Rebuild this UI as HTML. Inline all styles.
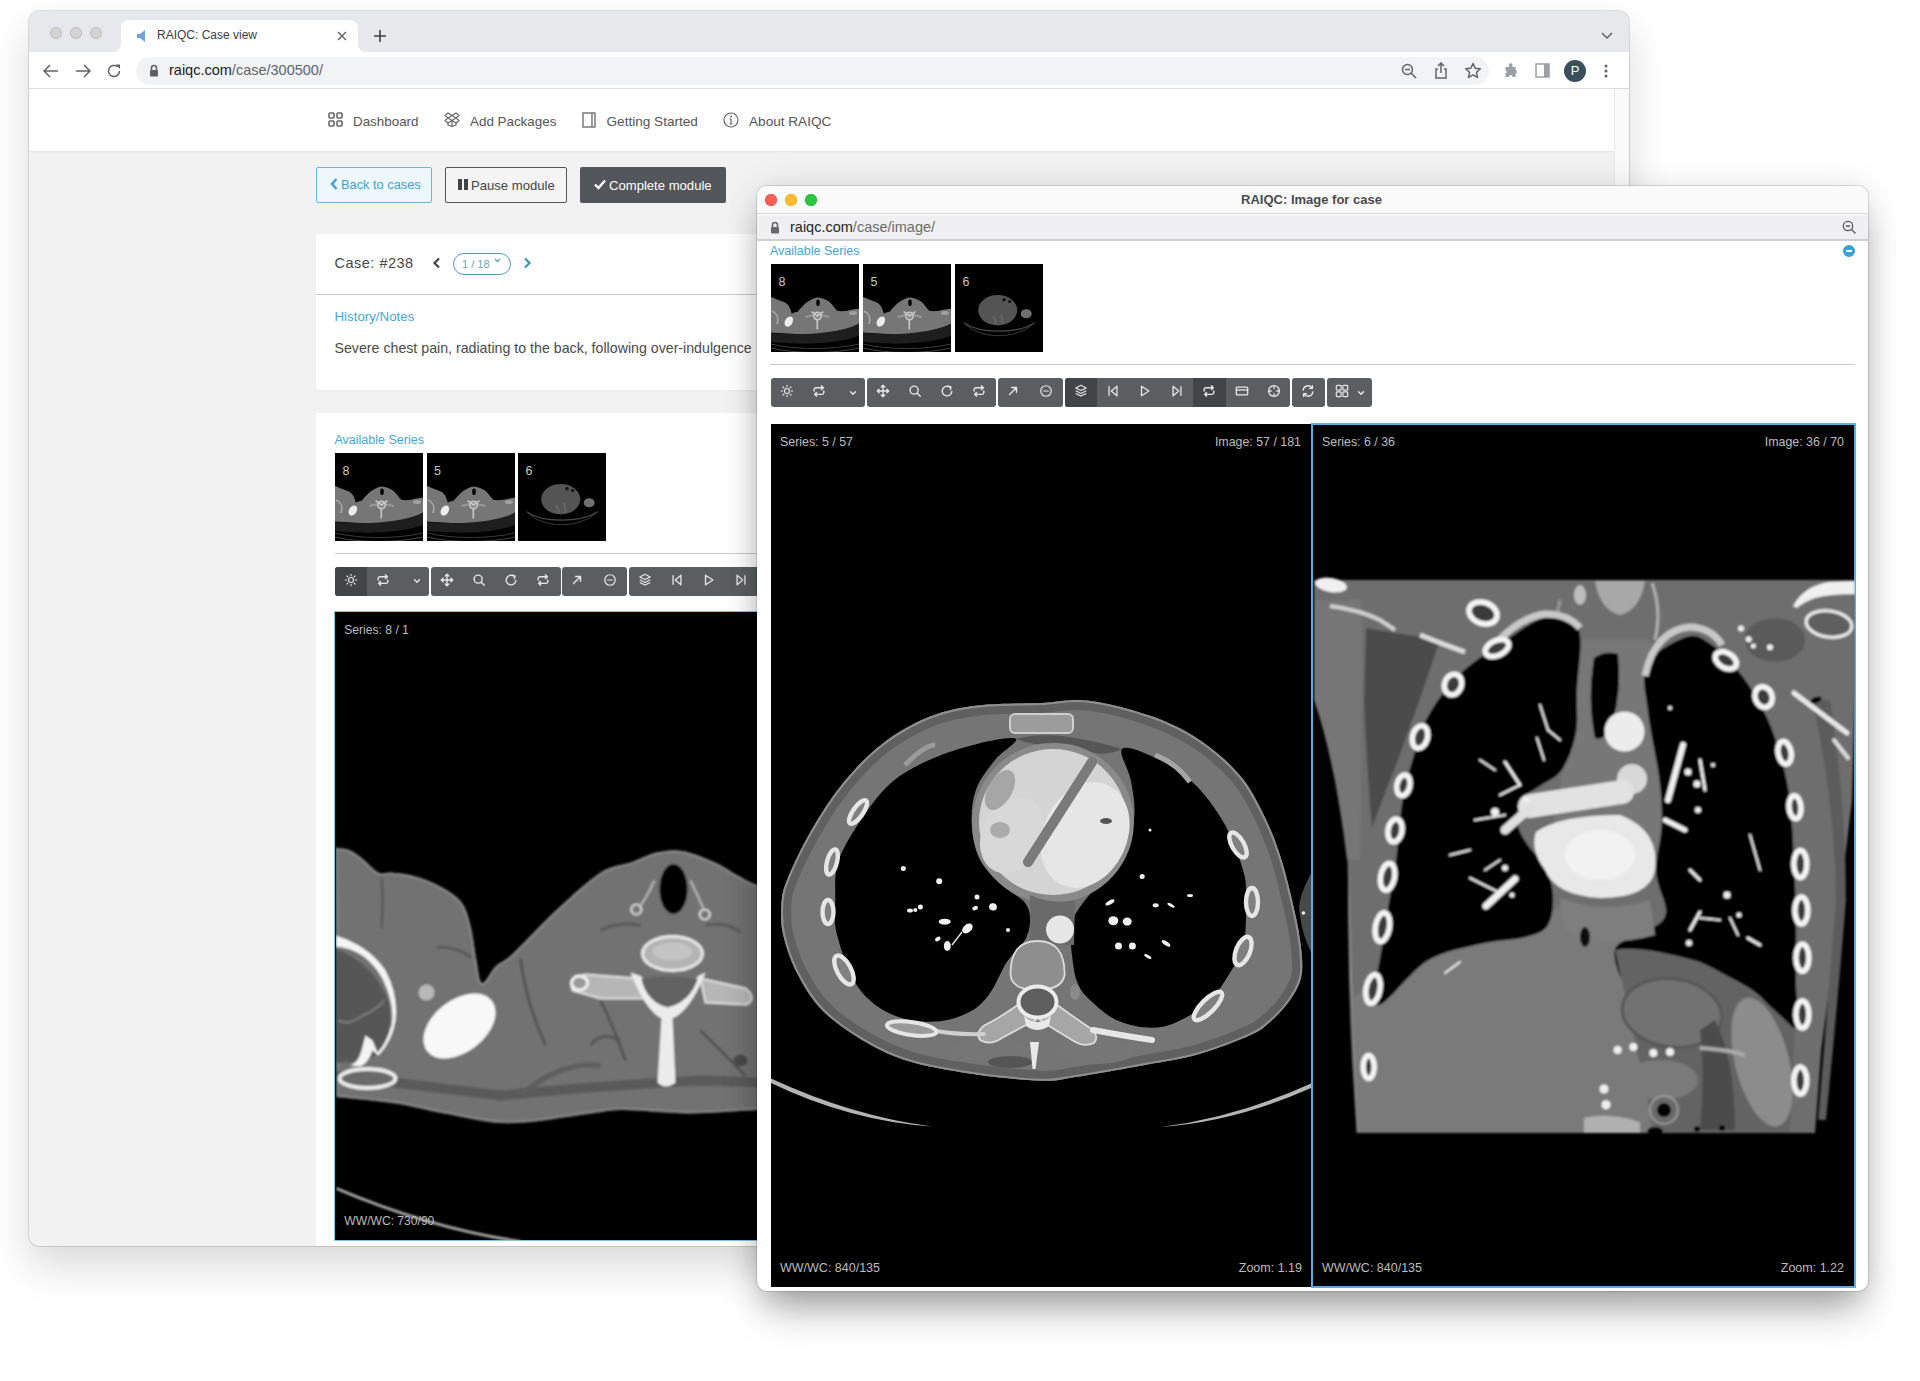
<!DOCTYPE html>
<html><head><meta charset="utf-8">
<style>
*{box-sizing:border-box;margin:0;padding:0}
html,body{width:1920px;height:1381px;overflow:hidden;background:#fff;font-family:"Liberation Sans",sans-serif}
.a{position:absolute}
#cw{left:29px;top:11px;width:1600px;height:1235px;border-radius:10px;background:#f2f2f2;overflow:hidden;box-shadow:0 20px 40px rgba(0,0,0,0.15),0 0 0 1px rgba(0,0,0,0.12)}
#fw{left:757px;top:186px;width:1111px;height:1105px;border-radius:10px;background:#fff;overflow:hidden;box-shadow:0 24px 38px -8px rgba(0,0,0,0.36),0 0 32px rgba(0,0,0,0.10),0 0 0 1px rgba(0,0,0,0.12)}
.tl{width:12px;height:12px;border-radius:50%}
.btn{height:36px;border-radius:2px;font-size:13px;line-height:34px;text-align:center}
.tb{height:29px;border-radius:3px;background:#5b5e61}
.bt{position:absolute;top:0;height:29px;width:32px}
.t{position:absolute;line-height:1;white-space:nowrap}
.ov{color:#c8c8c8;font-size:12px;position:absolute;white-space:nowrap}
</style></head><body>
<svg width="0" height="0" style="position:absolute"><defs>
<symbol id="th-neck" viewBox="0 0 88 88"><rect width="88" height="88" fill="#000"/>
<path d="M0 32.9 C3 34 9 36.5 12 37.8 C16 39 19 42 20.8 49.7 C22.5 48.5 24.5 48 26.7 47.7 C30 44 33 40 36.6 37.8 C40 35.5 44 33.4 47.5 33.4 C52 34 56 36 58.4 37.8 C62 41 64 45 66.3 46.7 C70 47.5 73 47 76 46.7 C80 46 84 45 88 44.8 V59.6 C84 62 80 64.5 76 65.5 C70 67.5 62 69 56.4 69.5 C50 70.2 43 70.5 36.6 70.5 C28 70.4 22 70 16.8 69.5 C10 69 4 68.8 0 68.5 Z" fill="#767676"/>
<path d="M0 69 C20 71 60 72 88 60 V72 C60 82 20 80 0 78Z" fill="#1e1e1e"/>
<path d="M0 80 C25 86 62 86 88 80" stroke="#3a3a3a" stroke-width="1" fill="none"/>
<path d="M0 84 C25 90 62 90 88 84" stroke="#555" stroke-width="0.8" fill="none"/>
<path d="M1 47 C6 49 8 54 6 60" stroke="#aaa" stroke-width="1.6" fill="none"/>
<ellipse cx="17.8" cy="57.6" rx="3.8" ry="5.5" transform="rotate(30 17.8 57.6)" fill="#ececec"/>
<ellipse cx="47" cy="38.8" rx="1.8" ry="3.2" fill="#000"/>
<path d="M34.6 53 Q46.5 49 58.4 53" stroke="#9a9a9a" stroke-width="2" fill="none"/>
<circle cx="46.5" cy="52" r="3.8" fill="#8a8a8a" stroke="#c8c8c8" stroke-width="1.5"/>
<path d="M40.6 47.7 L46.5 52 L52.5 47.7 M46.3 55.5 V65.5" stroke="#c8c8c8" stroke-width="1.6" fill="none"/>
<ellipse cx="82" cy="49" rx="4" ry="2" fill="#a0a0a0"/></symbol>
<symbol id="th-neck2" viewBox="0 0 88 88"><rect width="88" height="88" fill="#000"/>
<path d="M0 32.9 C3 34 9 36.5 12 37.8 C16 39 19 42 20.8 49.7 C22.5 48.5 24.5 48 26.7 47.7 C30 44 33 40 36.6 37.8 C40 35.5 44 33.4 47.5 33.4 C52 34 56 36 58.4 37.8 C62 41 64 45 66.3 46.7 C70 47.5 73 47 76 46.7 C80 46 84 45 88 44.8 V59.6 C84 62 80 64.5 76 65.5 C70 67.5 62 69 56.4 69.5 C50 70.2 43 70.5 36.6 70.5 C28 70.4 22 70 16.8 69.5 C10 69 4 68.8 0 68.5 Z" fill="#767676"/>
<path d="M0 69 C20 71 60 72 88 60 V72 C60 82 20 80 0 78Z" fill="#1e1e1e"/>
<path d="M0 80 C25 86 62 86 88 80" stroke="#3a3a3a" stroke-width="1" fill="none"/>
<path d="M0 84 C25 90 62 90 88 84" stroke="#555" stroke-width="0.8" fill="none"/>
<path d="M1 47 C6 49 8 54 6 60" stroke="#aaa" stroke-width="1.6" fill="none"/>
<ellipse cx="17.8" cy="57.6" rx="3.8" ry="5.5" transform="rotate(30 17.8 57.6)" fill="#ececec"/>
<ellipse cx="47" cy="38.8" rx="1.8" ry="3.2" fill="#000"/>
<path d="M34.6 53 Q46.5 49 58.4 53" stroke="#9a9a9a" stroke-width="2" fill="none"/>
<circle cx="46.5" cy="52" r="3.8" fill="#8a8a8a" stroke="#c8c8c8" stroke-width="1.5"/>
<path d="M40.6 47.7 L46.5 52 L52.5 47.7 M46.3 55.5 V65.5" stroke="#c8c8c8" stroke-width="1.6" fill="none"/>
<ellipse cx="82" cy="49" rx="4" ry="2" fill="#a0a0a0"/></symbol>
<symbol id="th-abd" viewBox="0 0 88 88"><rect width="88" height="88" fill="#000"/>
<ellipse cx="42.7" cy="46.2" rx="19.5" ry="15.3" fill="#545454"/>
<path d="M38 52 Q42 58 40 60 M46 50 Q48 56 47 60" stroke="#6a6a6a" stroke-width="1.5" fill="none"/>
<circle cx="49" cy="35.8" r="1.8" fill="#111"/><circle cx="54.6" cy="37.5" r="1.6" fill="#111"/>
<ellipse cx="71.2" cy="49.7" rx="5.5" ry="4.5" fill="#707070"/>
<path d="M8.7 58.7 C25 70 62 70 79.6 58.7" stroke="#4a4a4a" stroke-width="1.2" fill="none"/>
<path d="M8.7 58.7 C25 76 62 76 79.6 58.7" stroke="#3a3a3a" stroke-width="1" fill="none"/></symbol>
</defs></svg>
<svg width="0" height="0" style="position:absolute">
<defs>
<symbol id="i-sun" viewBox="0 0 16 16"><g fill="none" stroke="#e6e6e6" stroke-width="1.3" stroke-linecap="round"><circle cx="8" cy="8" r="2.8"/><path d="M8 1.5v1.6M8 12.9v1.6M1.5 8h1.6M12.9 8h1.6M3.4 3.4l1.1 1.1M11.5 11.5l1.1 1.1M3.4 12.6l1.1-1.1M11.5 4.5l1.1-1.1"/></g></symbol>
<symbol id="i-rep" viewBox="0 0 16 16"><g fill="none" stroke="#e6e6e6" stroke-width="1.6" stroke-linecap="round" stroke-linejoin="round"><path d="M2.5 8V6.2A2 2 0 0 1 4.5 4.2H13M10.8 2l2.2 2.2-2.2 2.2M13.5 8v1.8a2 2 0 0 1-2 2H3M5.2 14L3 11.8l2.2-2.2"/></g></symbol>
<symbol id="i-chev" viewBox="0 0 16 16"><path d="M4 6l4 4 4-4" fill="none" stroke="#e6e6e6" stroke-width="2.2" stroke-linecap="round" stroke-linejoin="round"/></symbol>
<symbol id="i-move" viewBox="0 0 16 16"><g fill="none" stroke="#e6e6e6" stroke-width="1.6" stroke-linecap="round" stroke-linejoin="round"><path d="M8 1.5v13M1.5 8h13M6 3.5l2-2 2 2M6 12.5l2 2 2-2M3.5 6l-2 2 2 2M12.5 6l2 2-2 2"/></g></symbol>
<symbol id="i-search" viewBox="0 0 16 16"><g fill="none" stroke="#e6e6e6" stroke-width="1.6" stroke-linecap="round"><circle cx="7" cy="7" r="4.6"/><path d="M10.5 10.5l3.5 3.5"/></g></symbol>
<symbol id="i-rot" viewBox="0 0 16 16"><g fill="none" stroke="#e6e6e6" stroke-width="1.6" stroke-linecap="round" stroke-linejoin="round"><path d="M13.5 8.5A5.5 5.5 0 1 1 11.5 3.8"/><path d="M9.5 2.5l3 .8-.6 3"/></g></symbol>
<symbol id="i-arr" viewBox="0 0 16 16"><g fill="none" stroke="#e6e6e6" stroke-width="1.6" stroke-linecap="round" stroke-linejoin="round"><path d="M4 12L12 4M6.5 4H12v5.5"/></g></symbol>
<symbol id="i-min" viewBox="0 0 16 16"><g fill="none" stroke="#e6e6e6" stroke-width="1.4" stroke-linecap="round"><circle cx="8" cy="8" r="6"/><path d="M5.3 8h5.4"/></g></symbol>
<symbol id="i-lay" viewBox="0 0 16 16"><g fill="none" stroke="#e6e6e6" stroke-width="1.4" stroke-linejoin="round"><path d="M8 1.5l6 3-6 3-6-3z"/><path d="M2 7.8l6 3 6-3M2 10.8l6 3 6-3"/></g></symbol>
<symbol id="i-prev" viewBox="0 0 16 16"><g fill="none" stroke="#e6e6e6" stroke-width="1.5" stroke-linejoin="round"><path d="M3.5 2.5v11M12.5 2.5L6 8l6.5 5.5z"/></g></symbol>
<symbol id="i-play" viewBox="0 0 16 16"><path d="M4 2.5L12.5 8 4 13.5z" fill="none" stroke="#e6e6e6" stroke-width="1.5" stroke-linejoin="round"/></symbol>
<symbol id="i-next" viewBox="0 0 16 16"><g fill="none" stroke="#e6e6e6" stroke-width="1.5" stroke-linejoin="round"><path d="M12.5 2.5v11M3.5 2.5L10 8l-6.5 5.5z"/></g></symbol>
<symbol id="i-card" viewBox="0 0 16 16"><g fill="none" stroke="#e6e6e6" stroke-width="1.5"><rect x="1.5" y="3.5" width="13" height="9" rx="1"/><path d="M1.5 6.8h13"/></g></symbol>
<symbol id="i-tgt" viewBox="0 0 16 16"><g fill="none" stroke="#e6e6e6" stroke-width="1.5" stroke-linecap="round"><circle cx="8" cy="8" r="6.2"/><path d="M8 1.8v3M8 11.2v3M1.8 8h3M11.2 8h3"/></g></symbol>
<symbol id="i-ref" viewBox="0 0 16 16"><g fill="none" stroke="#e6e6e6" stroke-width="1.6" stroke-linecap="round" stroke-linejoin="round"><path d="M2.5 7A5.5 5.5 0 0 1 12.8 5M13.5 9A5.5 5.5 0 0 1 3.2 11M13 1.8V5H9.8M3 14.2V11h3.2"/></g></symbol>
<symbol id="i-grid" viewBox="0 0 16 16"><g fill="none" stroke="#e6e6e6" stroke-width="1.4"><rect x="1.5" y="1.5" width="5.5" height="5.5" rx="1"/><rect x="9" y="1.5" width="5.5" height="5.5" rx="1"/><rect x="1.5" y="9" width="5.5" height="5.5" rx="1"/><rect x="9" y="9" width="5.5" height="5.5" rx="1"/></g></symbol>
</defs></svg>

<!-- ============ CHROME WINDOW ============ -->
<div id="cw" class="a">
  <!-- tab strip -->
  <div class="a" style="left:0;top:0;width:1600px;height:41px;background:#e6e8eb"></div>
  <div class="a tl" style="left:21px;top:16px;background:#d3d3d3;box-shadow:inset 0 0 0 1px #c2c2c2"></div>
  <div class="a tl" style="left:40.5px;top:16px;background:#d3d3d3;box-shadow:inset 0 0 0 1px #c2c2c2"></div>
  <div class="a tl" style="left:60.5px;top:16px;background:#d3d3d3;box-shadow:inset 0 0 0 1px #c2c2c2"></div>
  <div class="a" style="left:92px;top:9px;width:237px;height:32px;background:#fff;border-radius:8px 8px 0 0"></div>
  <div class="a" style="left:84px;top:33px;width:8px;height:8px;background:#fff"></div>
  <div class="a" style="left:76px;top:25px;width:16px;height:16px;background:#e6e8eb;border-radius:0 0 8px 0"></div>
  <div class="a" style="left:329px;top:33px;width:8px;height:8px;background:#fff"></div>
  <div class="a" style="left:329px;top:25px;width:16px;height:16px;background:#e6e8eb;border-radius:0 0 0 8px"></div>
  <svg class="a" style="left:106px;top:18px" width="14" height="14" viewBox="0 0 14 14"><path d="M2 5h3l5-4v12l-5-4H2z" fill="#6fa3d8"/></svg>
  <div class="a" style="left:128px;top:17px;font-size:12px;color:#3c4043;white-space:nowrap">RAIQC: Case view</div>
  <svg class="a" style="left:308px;top:20px" width="10" height="10" viewBox="0 0 10 10"><path d="M1 1L9 9M9 1L1 9" stroke="#5f6368" stroke-width="1.4"/></svg>
  <svg class="a" style="left:344px;top:18px" width="14" height="14" viewBox="0 0 14 14"><path d="M7 1v12M1 7h12" stroke="#3c4043" stroke-width="1.6"/></svg>
  <svg class="a" style="left:1572px;top:21px" width="12" height="8" viewBox="0 0 12 8"><path d="M1 1l5 5 5-5" stroke="#5f6368" stroke-width="1.5" fill="none"/></svg>
  <!-- toolbar -->
  <div class="a" style="left:0;top:41px;width:1600px;height:37px;background:#fff;border-bottom:1px solid #dadce0"></div>
  <svg class="a" style="left:14px;top:53px" width="16" height="14" viewBox="0 0 16 14"><path d="M15 7H2M7 1L1 7l6 6" stroke="#5f6368" stroke-width="1.5" fill="none"/></svg>
  <svg class="a" style="left:46px;top:53px" width="16" height="14" viewBox="0 0 16 14"><path d="M1 7h13M9 1l6 6-6 6" stroke="#5f6368" stroke-width="1.5" fill="none"/></svg>
  <svg class="a" style="left:77px;top:52px" width="16" height="16" viewBox="0 0 16 16"><path d="M13.5 8A5.5 5.5 0 1 1 11.6 3.8" stroke="#5f6368" stroke-width="1.5" fill="none"/><path d="M9.5 1.5h4.5v4.5z" fill="#5f6368"/></svg>
  <div class="a" style="left:107px;top:46px;width:1353px;height:28px;background:#f1f3f4;border-radius:14px"></div>
  <svg class="a" style="left:120px;top:53px" width="10" height="13" viewBox="0 0 10 13"><path d="M2.5 6V4a2.5 2.5 0 0 1 5 0v2" stroke="#5f6368" stroke-width="1.6" fill="none"/><rect x="1" y="6" width="8" height="6.5" rx="1" fill="#5f6368"/></svg>
  <div class="a" style="left:140px;top:51px;font-size:14.5px;color:#202124;white-space:nowrap">raiqc.com<span style="color:#5f6368">/case/300500/</span></div>
  <svg class="a" style="left:1372px;top:52px" width="16" height="16" viewBox="0 0 16 16"><circle cx="6.5" cy="6.5" r="5" stroke="#5f6368" stroke-width="1.5" fill="none"/><path d="M10 10l5 5M4 6.5h5" stroke="#5f6368" stroke-width="1.5"/></svg>
  <svg class="a" style="left:1404px;top:51px" width="16" height="18" viewBox="0 0 16 18"><path d="M5 7H3v9h10V7h-2M8 1v10M5 4l3-3 3 3" stroke="#5f6368" stroke-width="1.5" fill="none"/></svg>
  <svg class="a" style="left:1435px;top:51px" width="18" height="18" viewBox="0 0 18 18"><path d="M9 1.5l2.2 4.7 5.1.6-3.8 3.5 1 5.1L9 12.9l-4.5 2.5 1-5.1L1.7 6.8l5.1-.6z" stroke="#5f6368" stroke-width="1.5" fill="none" stroke-linejoin="round"/></svg>
  <svg class="a" style="left:1474px;top:52px" width="16" height="16" viewBox="0 0 16 16"><path d="M6 1.5a1.8 1.8 0 0 1 3.4 0V4h3.3v3.2a1.8 1.8 0 0 1 0 3.4V14H9.4v-.8a1.8 1.8 0 0 0-3.4 0V14H2.5v-3.4a1.8 1.8 0 0 0 0-3.4V4H6z" fill="#9aa0a6"/></svg>
  <svg class="a" style="left:1506px;top:52px" width="15" height="15" viewBox="0 0 15 15"><rect x="1" y="1" width="13" height="13" stroke="#9aa0a6" stroke-width="1.5" fill="none"/><rect x="9" y="1" width="5" height="13" fill="#9aa0a6"/></svg>
  <div class="a" style="left:1535px;top:49px;width:22px;height:22px;border-radius:50%;background:#3c4f5c;color:#fff;font-size:13px;line-height:22px;text-align:center">P</div>
  <svg class="a" style="left:1574px;top:52px" width="6" height="16" viewBox="0 0 6 16"><circle cx="3" cy="3" r="1.5" fill="#5f6368"/><circle cx="3" cy="8" r="1.5" fill="#5f6368"/><circle cx="3" cy="13" r="1.5" fill="#5f6368"/></svg>
  <!-- content -->
  <div class="a" style="left:0;top:78px;width:1585px;height:62px;background:#fff;box-shadow:0 1px 2px rgba(0,0,0,0.06)"></div>
  <div class="a" style="left:1585px;top:78px;width:15px;height:1157px;background:#fafafa;border-left:1px solid #e8e8e8"></div>
  <div class="a" style="left:-29px;top:-11px">
  <!-- nav -->
  <svg class="a" style="left:328px;top:112px" width="15" height="15" viewBox="0 0 15 15"><g fill="none" stroke="#666" stroke-width="1.6"><rect x="1" y="1" width="5" height="5" rx="1"/><rect x="9" y="1" width="5" height="5" rx="1"/><rect x="1" y="9" width="5" height="5" rx="1"/><rect x="9" y="9" width="5" height="5" rx="1"/></g></svg>
  <div class="t" style="left:353px;top:114.6px;font-size:13.4px;color:#555">Dashboard</div>
  <svg class="a" style="left:444px;top:112px" width="16" height="15" viewBox="0 0 16 15"><g fill="none" stroke="#666" stroke-width="1.2" stroke-linejoin="round"><path d="M4 1L1 3.5 4 6 1 8.5l3 2.5 4-2.5 4 2.5 3-2.5L12 6l3-2.5L12 1 8 3.5z"/><path d="M4 6l4-2.5L12 6 8 8.5zM4 11v2l4 1.5 4-1.5v-2M8 8.5v6"/></g></svg>
  <div class="t" style="left:470px;top:114.6px;font-size:13.4px;color:#555">Add Packages</div>
  <svg class="a" style="left:582px;top:112px" width="14" height="16" viewBox="0 0 14 16"><g fill="none" stroke="#666" stroke-width="1.3"><rect x="1" y="1" width="12" height="14"/><path d="M10 1v14"/></g></svg>
  <div class="t" style="left:606.5px;top:114.6px;font-size:13.6px;color:#555">Getting Started</div>
  <svg class="a" style="left:723px;top:112px" width="16" height="16" viewBox="0 0 16 16"><g fill="none" stroke="#666" stroke-width="1.2"><circle cx="8" cy="8" r="7"/><path d="M8 7v5M6.5 12h3M6.5 7H8"/></g><circle cx="8" cy="4.5" r="1" fill="#666"/></svg>
  <div class="t" style="left:749px;top:114.6px;font-size:13.6px;color:#555">About RAIQC</div>
  <!-- buttons -->
  <div class="a" style="left:315.5px;top:166.5px;width:116.5px;height:36px;border:1px solid #5bc0de;background:#eef7fb;border-radius:2px"></div>
  <svg class="a" style="left:330px;top:178px" width="8" height="12" viewBox="0 0 8 12"><path d="M6.5 1L2 6l4.5 5" stroke="#3ea2cf" stroke-width="2.4" fill="none"/></svg>
  <div class="t" style="left:341px;top:178.5px;font-size:12.8px;color:#3ea2cf">Back to cases</div>
  <div class="a" style="left:444.5px;top:166.5px;width:122.5px;height:36px;border:1px solid #555;background:#f4f4f4;border-radius:2px"></div>
  <div class="a" style="left:458px;top:179px;width:4px;height:11px;background:#444"></div>
  <div class="a" style="left:464px;top:179px;width:4px;height:11px;background:#444"></div>
  <div class="t" style="left:471px;top:178.5px;font-size:13.1px;color:#444">Pause module</div>
  <div class="a" style="left:580px;top:166.5px;width:146px;height:36px;background:#53575b;border-radius:2px"></div>
  <svg class="a" style="left:594px;top:179px" width="12" height="11" viewBox="0 0 12 11"><path d="M1 5.5l3.5 3.5L11 1.5" stroke="#fff" stroke-width="2.4" fill="none"/></svg>
  <div class="t" style="left:609px;top:178.5px;font-size:13.1px;color:#fff">Complete module</div>
  <!-- case panel -->
  <div class="a" style="left:315.5px;top:234px;width:1012px;height:156px;background:#fff;box-shadow:0 1px 2px rgba(0,0,0,0.04)"></div>
  <div class="a" style="left:315.5px;top:293.5px;width:1012px;height:1px;background:#ccc"></div>
  <div class="t" style="left:334.5px;top:256px;font-size:14.5px;color:#484848;letter-spacing:0.5px">Case: #238</div>
  <svg class="a" style="left:432px;top:257px" width="9" height="12" viewBox="0 0 9 12"><path d="M7 1.5L2.5 6 7 10.5" stroke="#444" stroke-width="2.2" fill="none"/></svg>
  <div class="a" style="left:453px;top:253px;width:58px;height:22px;border:1.8px solid #4a9db3;border-radius:11px"></div>
  <div class="t" style="left:462px;top:259px;font-size:11px;color:#6fa6b0">1 / 18</div>
  <svg class="a" style="left:494px;top:258px" width="7" height="5" viewBox="0 0 7 5"><path d="M1 1l2.5 2.5L6 1" stroke="#5aa8a0" stroke-width="1.3" fill="none"/></svg>
  <svg class="a" style="left:523px;top:257px" width="9" height="12" viewBox="0 0 9 12"><path d="M2 1.5L6.5 6 2 10.5" stroke="#3a97a8" stroke-width="2.2" fill="none"/></svg>
  <div class="t" style="left:334.5px;top:309.5px;font-size:13.3px;color:#45a7d0">History/Notes</div>
  <div class="t" style="left:334.5px;top:341px;font-size:14.2px;color:#4a4a4a">Severe chest pain, radiating to the back, following over-indulgence</div>
  <!-- series panel -->
  <div class="a" style="left:315.5px;top:412.5px;width:1012px;height:850px;background:#fff"></div>
  <div class="t" style="left:334.5px;top:433.7px;font-size:12.5px;color:#45a7d0">Available Series</div>
  <svg class="a" style="left:335px;top:453px" width="88" height="88"><use href="#th-neck"/></svg>
<div class="t" style="left:342.5px;top:465.0px;font-size:12.5px;color:#c8c8c8">8</div>
<svg class="a" style="left:426.5px;top:453px" width="88" height="88"><use href="#th-neck2"/></svg>
<div class="t" style="left:434.0px;top:465.0px;font-size:12.5px;color:#c8c8c8">5</div>
<svg class="a" style="left:518px;top:453px" width="88" height="88"><use href="#th-abd"/></svg>
<div class="t" style="left:525.5px;top:465.0px;font-size:12.5px;color:#c8c8c8">6</div>
  <div class="a" style="left:334.5px;top:553px;width:980px;height:1px;background:#ccc"></div>
  <div class="a tb" style="left:335px;top:566.5px;width:94px"></div>
<div class="a tb" style="left:430.5px;top:566.5px;width:130.0px"></div>
<div class="a tb" style="left:562px;top:566.5px;width:65px"></div>
<div class="a tb" style="left:629px;top:566.5px;width:171px"></div>
<div class="a" style="left:335px;top:566.5px;width:32px;height:29px;background:#424548;border-radius:3px 0 0 3px"></div>
<svg class="a" style="left:343.5px;top:572.7px" width="14" height="14"><use href="#i-sun"/></svg>
<svg class="a" style="left:376.0px;top:572.7px" width="14" height="14"><use href="#i-rep"/></svg>
<svg class="a" style="left:412.3px;top:576.2px" width="10" height="10"><use href="#i-chev"/></svg>
<svg class="a" style="left:440.0px;top:572.7px" width="14" height="14"><use href="#i-move"/></svg>
<svg class="a" style="left:471.5px;top:572.7px" width="14" height="14"><use href="#i-search"/></svg>
<svg class="a" style="left:504.2px;top:572.7px" width="14" height="14"><use href="#i-rot"/></svg>
<svg class="a" style="left:536.4px;top:572.7px" width="14" height="14"><use href="#i-rep"/></svg>
<svg class="a" style="left:570.3px;top:572.7px" width="14" height="14"><use href="#i-arr"/></svg>
<svg class="a" style="left:603.3px;top:572.7px" width="14" height="14"><use href="#i-min"/></svg>
<svg class="a" style="left:638.0px;top:572.7px" width="14" height="14"><use href="#i-lay"/></svg>
<svg class="a" style="left:670.0px;top:572.7px" width="14" height="14"><use href="#i-prev"/></svg>
<svg class="a" style="left:702.0px;top:572.7px" width="14" height="14"><use href="#i-play"/></svg>
<svg class="a" style="left:734.0px;top:572.7px" width="14" height="14"><use href="#i-next"/></svg>
  <div class="a" style="left:334px;top:611px;width:500px;height:630px;background:#000;border:1.5px solid #7cc6e6;border-right:none"></div>
<!--CCT--><svg class="a" style="left:335.5px;top:612.5px" width="440" height="628" viewBox="335.5 612.5 440 628"><defs><clipPath id="nkb"><path d="M335 847 C338.3 847.5 345.6 848.0 350.0 850.0 C354.4 852.0 357.9 855.0 362.6 858.7 C367.3 862.4 373.4 869.8 378.0 872.0 C382.6 874.2 384.4 871.5 390.0 872.0 C395.6 872.5 403.6 872.9 411.5 875.0 C419.4 877.1 429.5 880.4 437.6 884.7 C445.8 889.0 455.0 894.3 460.4 901.0 C465.8 907.7 467.4 915.2 470.0 925.0 C472.6 934.8 474.1 950.4 476.0 960.0 C477.9 969.6 478.4 981.5 481.6 982.5 C484.8 983.5 489.9 970.9 495.0 966.0 C500.1 961.1 502.0 962.7 512.5 953.0 C523.0 943.3 543.3 921.1 558.0 907.6 C572.7 894.1 588.5 879.3 600.5 871.7 C612.5 864.1 620.8 865.3 630.0 862.0 C639.2 858.7 647.3 853.9 656.0 852.0 C664.7 850.1 672.2 848.8 682.0 850.5 C691.8 852.2 705.4 857.9 714.6 862.0 C723.8 866.1 730.3 871.2 737.4 875.0 C744.5 878.8 746.6 880.5 757.0 884.7 C767.4 888.9 792.8 897.5 800.0 900.0 L800 1108 C792.8 1108.3 775.6 1108.8 757.0 1109.6 C738.4 1110.4 710.8 1113.0 688.5 1113.0 C666.2 1113.0 639.3 1109.6 623.0 1109.6 C606.7 1109.6 609.7 1110.8 590.7 1113.0 C571.7 1115.2 533.5 1122.7 509.0 1122.7 C484.6 1122.7 463.0 1116.3 444.0 1113.0 C425.0 1109.7 413.0 1105.7 395.0 1103.0 C377.0 1100.3 345.8 1097.7 336.0 1096.6 Z"/></clipPath><filter id="bl3" x="-5%" y="-5%" width="110%" height="110%"><feGaussianBlur stdDeviation="0.8"/></filter></defs><g filter="url(#bl3)"><path d="M336 1188 Q430 1228 520 1241" stroke="#b4b4b4" stroke-width="2.5" fill="none"/><path d="M335 847 C338.3 847.5 345.6 848.0 350.0 850.0 C354.4 852.0 357.9 855.0 362.6 858.7 C367.3 862.4 373.4 869.8 378.0 872.0 C382.6 874.2 384.4 871.5 390.0 872.0 C395.6 872.5 403.6 872.9 411.5 875.0 C419.4 877.1 429.5 880.4 437.6 884.7 C445.8 889.0 455.0 894.3 460.4 901.0 C465.8 907.7 467.4 915.2 470.0 925.0 C472.6 934.8 474.1 950.4 476.0 960.0 C477.9 969.6 478.4 981.5 481.6 982.5 C484.8 983.5 489.9 970.9 495.0 966.0 C500.1 961.1 502.0 962.7 512.5 953.0 C523.0 943.3 543.3 921.1 558.0 907.6 C572.7 894.1 588.5 879.3 600.5 871.7 C612.5 864.1 620.8 865.3 630.0 862.0 C639.2 858.7 647.3 853.9 656.0 852.0 C664.7 850.1 672.2 848.8 682.0 850.5 C691.8 852.2 705.4 857.9 714.6 862.0 C723.8 866.1 730.3 871.2 737.4 875.0 C744.5 878.8 746.6 880.5 757.0 884.7 C767.4 888.9 792.8 897.5 800.0 900.0 L800 1108 C792.8 1108.3 775.6 1108.8 757.0 1109.6 C738.4 1110.4 710.8 1113.0 688.5 1113.0 C666.2 1113.0 639.3 1109.6 623.0 1109.6 C606.7 1109.6 609.7 1110.8 590.7 1113.0 C571.7 1115.2 533.5 1122.7 509.0 1122.7 C484.6 1122.7 463.0 1116.3 444.0 1113.0 C425.0 1109.7 413.0 1105.7 395.0 1103.0 C377.0 1100.3 345.8 1097.7 336.0 1096.6 Z" fill="#727272"/><g clip-path="url(#nkb)"><path d="M335 847 C338.3 847.5 345.6 848.0 350.0 850.0 C354.4 852.0 357.9 855.0 362.6 858.7 C367.3 862.4 373.4 869.8 378.0 872.0 C382.6 874.2 384.4 871.5 390.0 872.0 C395.6 872.5 403.6 872.9 411.5 875.0 C419.4 877.1 429.5 880.4 437.6 884.7 C445.8 889.0 455.0 894.3 460.4 901.0 C465.8 907.7 467.4 915.2 470.0 925.0 C472.6 934.8 474.1 950.4 476.0 960.0 C477.9 969.6 478.4 981.5 481.6 982.5 C484.8 983.5 489.9 970.9 495.0 966.0 C500.1 961.1 502.0 962.7 512.5 953.0 C523.0 943.3 543.3 921.1 558.0 907.6 C572.7 894.1 588.5 879.3 600.5 871.7 C612.5 864.1 620.8 865.3 630.0 862.0 C639.2 858.7 647.3 853.9 656.0 852.0 C664.7 850.1 672.2 848.8 682.0 850.5 C691.8 852.2 705.4 857.9 714.6 862.0 C723.8 866.1 730.3 871.2 737.4 875.0 C744.5 878.8 746.6 880.5 757.0 884.7 C767.4 888.9 792.8 897.5 800.0 900.0 L800 1108 C792.8 1108.3 775.6 1108.8 757.0 1109.6 C738.4 1110.4 710.8 1113.0 688.5 1113.0 C666.2 1113.0 639.3 1109.6 623.0 1109.6 C606.7 1109.6 609.7 1110.8 590.7 1113.0 C571.7 1115.2 533.5 1122.7 509.0 1122.7 C484.6 1122.7 463.0 1116.3 444.0 1113.0 C425.0 1109.7 413.0 1105.7 395.0 1103.0 C377.0 1100.3 345.8 1097.7 336.0 1096.6 Z" fill="none" stroke="#858585" stroke-width="5"/><path d="M336 1075 Q420 1085 500 1095 Q600 1085 700 1080 L760 1082" stroke="#5a5a5a" stroke-width="10" fill="none"/><path d="M520 1095 Q560 1060 600 1065" stroke="#5e5e5e" stroke-width="5" fill="none"/><path d="M520 958 Q525 1000 545 1045" stroke="#555" stroke-width="3" fill="none"/><path d="M600 1000 Q615 1030 625 1060" stroke="#555" stroke-width="3" fill="none"/><path d="M700 1030 Q730 1060 745 1075" stroke="#555" stroke-width="3" fill="none"/><path d="M590 1045 Q600 1030 620 1040" stroke="#555" stroke-width="3" fill="none"/></g><path d="M335 948 Q372 962 388 1000 Q394 1030 380 1050 Q368 1062 350 1062 L335 1062Z" fill="#565656"/><path d="M335 946 Q365 948 382 978 Q395 1005 391 1025 Q386 1043 377 1052 L372 1040 L365 1035 L361 1050 Q358 1062 350 1065 L360 1066 Q368 1062 372 1050 L378 1055 Q392 1040 395 1020 Q398 995 385 970 Q368 945 335 935Z" fill="#f4f4f4"/><path d="M337 1020 Q350 1025 362 1015 Q375 1010 384 1000" stroke="#888" stroke-width="1.5" fill="none"/><ellipse cx="367" cy="1078" rx="28" ry="9.5" transform="rotate(0 367 1078)" fill="#6a6a6a" stroke="#ececec" stroke-width="4"/><ellipse cx="459" cy="1025.5" rx="41" ry="26" transform="rotate(-38 459 1025.5)" fill="#f8f8f8"/><ellipse cx="426" cy="992" rx="8" ry="8" transform="rotate(0 426 992)" fill="#b8b8b8"/><path d="M381 877 Q383 900 381 928" stroke="#5a5a5a" stroke-width="2.5" fill="none"/><path d="M436 947 Q455 945 471 957" stroke="#5a5a5a" stroke-width="3" fill="none"/><ellipse cx="673" cy="888.5" rx="14" ry="25" fill="#000"/><path d="M654 880 Q646 897 640 905" stroke="#b8b8b8" stroke-width="2" fill="none"/><path d="M690 880 Q698 897 703 908" stroke="#b8b8b8" stroke-width="2" fill="none"/><ellipse cx="635.8" cy="909" rx="5" ry="5" transform="rotate(0 635.8 909)" fill="#777" stroke="#d8d8d8" stroke-width="2.2"/><ellipse cx="704.3" cy="914" rx="5" ry="5" transform="rotate(0 704.3 914)" fill="#777" stroke="#d8d8d8" stroke-width="2.2"/><path d="M600 930 Q620 920 640 925 M705 925 Q725 920 740 932" stroke="#585858" stroke-width="3" fill="none"/><ellipse cx="672" cy="953" rx="30" ry="17" transform="rotate(0 672 953)" fill="#b4b4b4" stroke="#e8e8e8" stroke-width="3"/><ellipse cx="672" cy="951" rx="20" ry="9" fill="#c4c4c4"/><path d="M638 978 L585 974 Q568 978 572 990 L600 998 L645 998Z" fill="#b6b6b6" stroke="#e0e0e0" stroke-width="2"/><path d="M700 978 L745 988 Q757 998 746 1004 L705 1002Z" fill="#b6b6b6" stroke="#e0e0e0" stroke-width="2"/><ellipse cx="579" cy="982.5" rx="8" ry="7" transform="rotate(0 579 982.5)" fill="#999" stroke="#f2f2f2" stroke-width="3"/><path d="M630 972 Q645 1010 661 1018 L657 1082 Q665 1090 675 1082 L672 1018 Q690 1010 705 972 L697 976 Q690 1002 667 1007 Q646 1002 641 976 Z" fill="#ececec"/><path d="M641 979 Q667 972 697 979 Q690 1001 667 1006 Q646 1001 641 979Z" fill="#626262"/><ellipse cx="740" cy="1060" rx="7" ry="6" fill="#4a4a4a"/></g></svg><!--/CCT-->
<div class="t" style="left:344.3px;top:624px;font-size:12.1px;color:#bdbdbd">Series: 8 / 1</div>
<div class="t" style="left:344.3px;top:1215px;font-size:12.1px;color:#bdbdbd">WW/WC: 730/90</div>

</div>

</div>

<!-- ============ FRONT WINDOW ============ -->
<div id="fw" class="a">
  <div class="a" style="left:0;top:0;width:1111px;height:28px;background:#fafafa;border-bottom:1px solid #d4d4d4"></div>
  <div class="a tl" style="left:7.5px;top:8px;background:#fe5f57;box-shadow:inset 0 0 0 0.5px #e0443e"></div>
  <div class="a tl" style="left:27.5px;top:8px;background:#febc2e;box-shadow:inset 0 0 0 0.5px #dea123"></div>
  <div class="a tl" style="left:47.5px;top:8px;background:#28c840;box-shadow:inset 0 0 0 0.5px #1aab29"></div>
  <div class="a" style="left:0;top:6px;width:1109px;text-align:center;font-size:13px;font-weight:bold;color:#4a4a4a">RAIQC: Image for case</div>
  <div class="a" style="left:0;top:29px;width:1111px;height:26px;background:#f0f0f2;border-bottom:2px solid #cfcfd1"></div>
  <svg class="a" style="left:13px;top:35px" width="10" height="13" viewBox="0 0 10 13"><path d="M2.5 6V4a2.5 2.5 0 0 1 5 0v2" stroke="#6a6a6a" stroke-width="1.6" fill="none"/><rect x="1" y="6" width="8" height="6.5" rx="1" fill="#6a6a6a"/></svg>
  <div class="a" style="left:33px;top:33px;font-size:14.5px;color:#262626;white-space:nowrap">raiqc.com<span style="color:#6a6a6a">/case/image/</span></div>
  <svg class="a" style="left:1085px;top:34px" width="15" height="15" viewBox="0 0 15 15"><circle cx="6" cy="6" r="4.7" stroke="#555" stroke-width="1.3" fill="none"/><path d="M9.5 9.5l4 4M3.8 6h4.4" stroke="#555" stroke-width="1.3"/></svg>
  <div class="a" style="left:-757px;top:-186px">
<div class="t" style="left:770px;top:245px;font-size:12.5px;color:#45a7d0">Available Series</div>
<div class="a" style="left:1843px;top:245px;width:12px;height:12px;border-radius:50%;background:#3aa3d4"></div>
<div class="a" style="left:1846px;top:250.3px;width:6px;height:1.6px;background:#fff"></div>
<svg class="a" style="left:771px;top:264px" width="88" height="88"><use href="#th-neck"/></svg>
<div class="t" style="left:778.5px;top:276.0px;font-size:12.5px;color:#c8c8c8">8</div>
<svg class="a" style="left:863px;top:264px" width="88" height="88"><use href="#th-neck2"/></svg>
<div class="t" style="left:870.5px;top:276.0px;font-size:12.5px;color:#c8c8c8">5</div>
<svg class="a" style="left:955px;top:264px" width="88" height="88"><use href="#th-abd"/></svg>
<div class="t" style="left:962.5px;top:276.0px;font-size:12.5px;color:#c8c8c8">6</div>
<div class="a" style="left:770px;top:364px;width:1085px;height:1px;background:#ccc"></div>
<div class="a tb" style="left:771px;top:378px;width:94px"></div>
<div class="a tb" style="left:867px;top:378px;width:128.5px"></div>
<div class="a tb" style="left:998px;top:378px;width:65px"></div>
<div class="a tb" style="left:1065px;top:378px;width:225px"></div>
<div class="a tb" style="left:1292px;top:378px;width:33px"></div>
<div class="a tb" style="left:1326.5px;top:378px;width:45.5px"></div>
<div class="a" style="left:1065px;top:378px;width:32px;height:29px;background:#424548;border-radius:3px 0 0 3px"></div>
<div class="a" style="left:1193px;top:378px;width:33px;height:29px;background:#424548"></div>
<svg class="a" style="left:779.5px;top:384.2px" width="14" height="14"><use href="#i-sun"/></svg>
<svg class="a" style="left:811.5px;top:384.2px" width="14" height="14"><use href="#i-rep"/></svg>
<svg class="a" style="left:847.5px;top:387.7px" width="10" height="10"><use href="#i-chev"/></svg>
<svg class="a" style="left:876.0px;top:384.2px" width="14" height="14"><use href="#i-move"/></svg>
<svg class="a" style="left:907.5px;top:384.2px" width="14" height="14"><use href="#i-search"/></svg>
<svg class="a" style="left:940.0px;top:384.2px" width="14" height="14"><use href="#i-rot"/></svg>
<svg class="a" style="left:972.0px;top:384.2px" width="14" height="14"><use href="#i-rep"/></svg>
<svg class="a" style="left:1006.3px;top:384.2px" width="14" height="14"><use href="#i-arr"/></svg>
<svg class="a" style="left:1039.3px;top:384.2px" width="14" height="14"><use href="#i-min"/></svg>
<svg class="a" style="left:1074.0px;top:384.2px" width="14" height="14"><use href="#i-lay"/></svg>
<svg class="a" style="left:1106.0px;top:384.2px" width="14" height="14"><use href="#i-prev"/></svg>
<svg class="a" style="left:1138.0px;top:384.2px" width="14" height="14"><use href="#i-play"/></svg>
<svg class="a" style="left:1170.0px;top:384.2px" width="14" height="14"><use href="#i-next"/></svg>
<svg class="a" style="left:1202.2px;top:384.2px" width="14" height="14"><use href="#i-rep"/></svg>
<svg class="a" style="left:1234.7px;top:384.2px" width="14" height="14"><use href="#i-card"/></svg>
<svg class="a" style="left:1266.7px;top:384.2px" width="14" height="14"><use href="#i-tgt"/></svg>
<svg class="a" style="left:1301.0px;top:384.2px" width="14" height="14"><use href="#i-ref"/></svg>
<svg class="a" style="left:1335.2px;top:384.2px" width="14" height="14"><use href="#i-grid"/></svg>
<svg class="a" style="left:1355.5px;top:387.7px" width="10" height="10"><use href="#i-chev"/></svg>
<div class="a" style="left:771px;top:424px;width:540px;height:863px;background:#000"></div>
<!--FCT1--><svg class="a" style="left:771px;top:424px" width="540" height="863" viewBox="771 424 540 863"><defs><clipPath id="axb"><path d="M1041.0 703.0 C1059.5 702.2 1070.2 698.4 1088.8 700.7 C1107.4 703.0 1133.9 710.0 1152.5 716.6 C1171.1 723.2 1185.7 730.7 1200.3 740.5 C1214.9 750.3 1229.4 763.1 1240.0 775.6 C1250.6 788.1 1257.3 802.1 1264.0 815.4 C1270.7 828.7 1275.3 841.1 1280.0 855.2 C1284.7 869.3 1288.7 885.9 1292.0 900.0 C1295.3 914.1 1298.4 927.5 1300.0 940.0 C1301.6 952.5 1303.3 965.0 1301.6 975.0 C1299.9 985.0 1295.3 992.2 1290.0 1000.0 C1284.7 1007.8 1276.8 1016.1 1270.0 1022.0 C1263.2 1027.9 1261.6 1030.1 1249.5 1035.5 C1237.4 1040.9 1214.8 1049.7 1197.4 1054.6 C1180.0 1059.5 1165.3 1061.3 1145.0 1065.0 C1124.7 1068.7 1093.0 1074.4 1075.7 1077.0 C1058.4 1079.6 1058.5 1081.2 1041.0 1080.7 C1023.5 1080.2 992.6 1076.9 970.8 1073.7 C949.0 1070.5 927.4 1066.8 910.0 1061.6 C892.6 1056.4 881.0 1050.9 866.5 1042.5 C852.0 1034.1 834.6 1022.6 823.0 1011.0 C811.4 999.4 803.6 985.7 797.0 973.0 C790.4 960.3 785.8 946.0 783.2 934.7 C780.6 923.4 780.8 914.1 781.4 905.0 C782.0 895.9 782.1 892.3 787.0 880.0 C791.9 867.7 801.5 847.4 810.8 831.3 C820.1 815.2 830.8 798.1 842.7 783.5 C854.7 768.9 868.0 754.9 882.5 743.7 C897.0 732.6 914.1 723.0 930.0 716.6 C945.9 710.2 959.5 707.8 978.0 705.5 C996.5 703.2 1022.5 703.8 1041.0 703.0Z"/></clipPath><filter id="bl1" x="-5%" y="-5%" width="110%" height="110%"><feGaussianBlur stdDeviation="0.7"/></filter></defs><g filter="url(#bl1)"><path d="M771 1078.5 Q852 1116 932 1126.5 Q850 1121 771 1083Z" fill="#b4b4b4"/><path d="M1160 1127 Q1235 1118 1311 1083.5 L1311 1088 Q1235 1122 1160 1127Z" fill="#b4b4b4"/><path d="M1312 872 Q1296 900 1300 915 Q1302 935 1312 954Z" fill="#4a4a4a"/><circle cx="1303.4" cy="913" r="1.8" fill="#eee"/><path d="M1041.0 703.0 C1059.5 702.2 1070.2 698.4 1088.8 700.7 C1107.4 703.0 1133.9 710.0 1152.5 716.6 C1171.1 723.2 1185.7 730.7 1200.3 740.5 C1214.9 750.3 1229.4 763.1 1240.0 775.6 C1250.6 788.1 1257.3 802.1 1264.0 815.4 C1270.7 828.7 1275.3 841.1 1280.0 855.2 C1284.7 869.3 1288.7 885.9 1292.0 900.0 C1295.3 914.1 1298.4 927.5 1300.0 940.0 C1301.6 952.5 1303.3 965.0 1301.6 975.0 C1299.9 985.0 1295.3 992.2 1290.0 1000.0 C1284.7 1007.8 1276.8 1016.1 1270.0 1022.0 C1263.2 1027.9 1261.6 1030.1 1249.5 1035.5 C1237.4 1040.9 1214.8 1049.7 1197.4 1054.6 C1180.0 1059.5 1165.3 1061.3 1145.0 1065.0 C1124.7 1068.7 1093.0 1074.4 1075.7 1077.0 C1058.4 1079.6 1058.5 1081.2 1041.0 1080.7 C1023.5 1080.2 992.6 1076.9 970.8 1073.7 C949.0 1070.5 927.4 1066.8 910.0 1061.6 C892.6 1056.4 881.0 1050.9 866.5 1042.5 C852.0 1034.1 834.6 1022.6 823.0 1011.0 C811.4 999.4 803.6 985.7 797.0 973.0 C790.4 960.3 785.8 946.0 783.2 934.7 C780.6 923.4 780.8 914.1 781.4 905.0 C782.0 895.9 782.1 892.3 787.0 880.0 C791.9 867.7 801.5 847.4 810.8 831.3 C820.1 815.2 830.8 798.1 842.7 783.5 C854.7 768.9 868.0 754.9 882.5 743.7 C897.0 732.6 914.1 723.0 930.0 716.6 C945.9 710.2 959.5 707.8 978.0 705.5 C996.5 703.2 1022.5 703.8 1041.0 703.0Z" fill="#747474"/><g clip-path="url(#axb)"><path d="M1041.0 703.0 C1059.5 702.2 1070.2 698.4 1088.8 700.7 C1107.4 703.0 1133.9 710.0 1152.5 716.6 C1171.1 723.2 1185.7 730.7 1200.3 740.5 C1214.9 750.3 1229.4 763.1 1240.0 775.6 C1250.6 788.1 1257.3 802.1 1264.0 815.4 C1270.7 828.7 1275.3 841.1 1280.0 855.2 C1284.7 869.3 1288.7 885.9 1292.0 900.0 C1295.3 914.1 1298.4 927.5 1300.0 940.0 C1301.6 952.5 1303.3 965.0 1301.6 975.0 C1299.9 985.0 1295.3 992.2 1290.0 1000.0 C1284.7 1007.8 1276.8 1016.1 1270.0 1022.0 C1263.2 1027.9 1261.6 1030.1 1249.5 1035.5 C1237.4 1040.9 1214.8 1049.7 1197.4 1054.6 C1180.0 1059.5 1165.3 1061.3 1145.0 1065.0 C1124.7 1068.7 1093.0 1074.4 1075.7 1077.0 C1058.4 1079.6 1058.5 1081.2 1041.0 1080.7 C1023.5 1080.2 992.6 1076.9 970.8 1073.7 C949.0 1070.5 927.4 1066.8 910.0 1061.6 C892.6 1056.4 881.0 1050.9 866.5 1042.5 C852.0 1034.1 834.6 1022.6 823.0 1011.0 C811.4 999.4 803.6 985.7 797.0 973.0 C790.4 960.3 785.8 946.0 783.2 934.7 C780.6 923.4 780.8 914.1 781.4 905.0 C782.0 895.9 782.1 892.3 787.0 880.0 C791.9 867.7 801.5 847.4 810.8 831.3 C820.1 815.2 830.8 798.1 842.7 783.5 C854.7 768.9 868.0 754.9 882.5 743.7 C897.0 732.6 914.1 723.0 930.0 716.6 C945.9 710.2 959.5 707.8 978.0 705.5 C996.5 703.2 1022.5 703.8 1041.0 703.0Z" fill="none" stroke="#606060" stroke-width="20"/><path d="M1041.0 703.0 C1059.5 702.2 1070.2 698.4 1088.8 700.7 C1107.4 703.0 1133.9 710.0 1152.5 716.6 C1171.1 723.2 1185.7 730.7 1200.3 740.5 C1214.9 750.3 1229.4 763.1 1240.0 775.6 C1250.6 788.1 1257.3 802.1 1264.0 815.4 C1270.7 828.7 1275.3 841.1 1280.0 855.2 C1284.7 869.3 1288.7 885.9 1292.0 900.0 C1295.3 914.1 1298.4 927.5 1300.0 940.0 C1301.6 952.5 1303.3 965.0 1301.6 975.0 C1299.9 985.0 1295.3 992.2 1290.0 1000.0 C1284.7 1007.8 1276.8 1016.1 1270.0 1022.0 C1263.2 1027.9 1261.6 1030.1 1249.5 1035.5 C1237.4 1040.9 1214.8 1049.7 1197.4 1054.6 C1180.0 1059.5 1165.3 1061.3 1145.0 1065.0 C1124.7 1068.7 1093.0 1074.4 1075.7 1077.0 C1058.4 1079.6 1058.5 1081.2 1041.0 1080.7 C1023.5 1080.2 992.6 1076.9 970.8 1073.7 C949.0 1070.5 927.4 1066.8 910.0 1061.6 C892.6 1056.4 881.0 1050.9 866.5 1042.5 C852.0 1034.1 834.6 1022.6 823.0 1011.0 C811.4 999.4 803.6 985.7 797.0 973.0 C790.4 960.3 785.8 946.0 783.2 934.7 C780.6 923.4 780.8 914.1 781.4 905.0 C782.0 895.9 782.1 892.3 787.0 880.0 C791.9 867.7 801.5 847.4 810.8 831.3 C820.1 815.2 830.8 798.1 842.7 783.5 C854.7 768.9 868.0 754.9 882.5 743.7 C897.0 732.6 914.1 723.0 930.0 716.6 C945.9 710.2 959.5 707.8 978.0 705.5 C996.5 703.2 1022.5 703.8 1041.0 703.0Z" fill="none" stroke="#8e8e8e" stroke-width="4"/><ellipse cx="990" cy="1050" rx="40" ry="12" fill="#767676"/><ellipse cx="1095" cy="1052" rx="40" ry="12" fill="#767676"/><ellipse cx="1010" cy="1062" rx="22" ry="6" fill="#555"/></g><path d="M1016 739 Q1053 728 1122 749 Q1100 760 1070 745 Q1040 748 1016 739Z" fill="#565656"/><path d="M1016.0 739.0 C1013.2 736.3 992.3 740.3 978.0 743.7 C963.7 747.1 944.9 753.0 930.3 759.6 C915.7 766.2 902.5 772.9 890.5 783.5 C878.5 794.1 867.4 810.1 858.6 823.4 C849.8 836.6 841.8 850.2 837.9 863.0 C834.0 875.8 835.4 888.0 835.3 900.0 C835.1 912.0 833.2 920.2 837.0 934.7 C840.8 949.2 848.6 973.6 857.9 986.9 C867.2 1000.2 879.6 1008.9 892.6 1014.7 C905.6 1020.5 923.0 1022.2 936.0 1021.6 C949.0 1021.0 961.8 1016.0 970.8 1011.2 C979.8 1006.4 984.0 1001.2 990.0 993.0 C996.0 984.8 1001.0 970.8 1006.8 962.0 C1012.6 953.2 1021.1 947.0 1025.0 940.0 C1028.9 933.0 1030.0 926.3 1030.0 920.0 C1030.0 913.7 1029.4 908.2 1024.7 902.4 C1020.0 896.6 1009.5 892.2 1002.0 885.0 C994.5 877.8 984.5 869.2 979.5 859.0 C974.5 848.8 972.3 835.6 971.7 824.0 C971.1 812.4 972.1 800.2 976.0 789.5 C979.9 778.8 988.3 768.4 995.0 760.0 C1001.7 751.6 1018.8 741.7 1016.0 739.0Z" fill="#000"/><path d="M1122.0 749.0 C1125.6 744.9 1140.8 751.0 1152.5 756.5 C1164.2 762.0 1180.3 770.9 1192.3 782.0 C1204.2 793.1 1215.7 808.6 1224.2 823.4 C1232.7 838.2 1239.7 858.2 1243.3 871.0 C1246.9 883.8 1245.9 887.9 1246.0 900.0 C1246.1 912.1 1246.3 931.8 1244.0 943.4 C1241.7 955.0 1238.3 959.4 1232.0 969.5 C1225.7 979.6 1217.6 994.5 1206.0 1004.0 C1194.4 1013.5 1176.9 1023.9 1162.6 1026.8 C1148.3 1029.7 1132.1 1026.1 1120.0 1021.6 C1107.9 1017.1 1097.2 1006.7 1090.0 1000.0 C1082.8 993.3 1080.0 989.0 1077.0 981.5 C1074.0 974.0 1073.0 962.8 1072.0 955.0 C1071.0 947.2 1070.5 941.7 1071.0 935.0 C1071.5 928.3 1070.5 923.3 1075.0 915.0 C1079.5 906.7 1089.6 894.3 1097.7 885.0 C1105.8 875.7 1117.7 870.3 1123.8 859.0 C1129.9 847.7 1133.0 830.3 1134.2 817.3 C1135.4 804.3 1133.0 792.4 1131.0 781.0 C1129.0 769.6 1118.4 753.1 1122.0 749.0Z" fill="#000"/><ellipse cx="1053" cy="823" rx="81" ry="80" transform="rotate(-20 1053 823)" fill="#8a8a8a"/><ellipse cx="1053" cy="822" rx="74" ry="73" fill="#d4d4d4"/><ellipse cx="1085" cy="835" rx="42" ry="55" transform="rotate(25 1085 835)" fill="#e6e6e6"/><ellipse cx="1012" cy="835" rx="30" ry="40" transform="rotate(25 1012 835)" fill="#d8d8d8"/><ellipse cx="1000" cy="790" rx="12" ry="22" transform="rotate(30 1000 790)" fill="#9a9a9a" opacity="0.8"/><ellipse cx="1000" cy="830" rx="10" ry="8" fill="#a0a0a0" opacity="0.8"/><path d="M1092 762 L1028 862" stroke="#7a7a7a" stroke-width="10" stroke-linecap="round"/><ellipse cx="1106" cy="821" rx="6" ry="3" fill="#555"/><path d="M1030 895 Q1052 905 1075 900 L1074 945 L1030 945Z" fill="#6a6a6a"/><circle cx="1060" cy="929.5" r="14" fill="#e6e6e6"/><path d="M1010.5 975 Q1010 941 1037.5 941 Q1065 941 1064.6 975 Q1062 990 1037 990 Q1012 990 1010.5 975Z" fill="#8e8e8e" stroke="#dcdcdc" stroke-width="1.8"/><path d="M1022 1002 Q1000 1018 985 1025 Q975 1032 980 1040 Q990 1046 1002 1038 Q1020 1028 1036 1020Z" fill="#a6a6a6" stroke="#dcdcdc" stroke-width="1.8"/><path d="M1053 1002 Q1075 1018 1090 1028 Q1100 1036 1094 1043 Q1084 1048 1072 1040 Q1055 1030 1040 1020Z" fill="#a6a6a6" stroke="#dcdcdc" stroke-width="1.8"/><ellipse cx="1037.5" cy="1002" rx="19" ry="15.5" fill="#5e5e5e" stroke="#ececec" stroke-width="4"/><path d="M1024 1016 Q1037 1028 1051 1016 L1049 1026 Q1037 1034 1026 1026Z" fill="#e8e8e8"/><path d="M1030 1042 L1039 1042 L1035.5 1069 L1032.5 1069Z" fill="#e8e8e8"/><path d="M1093 1030 Q1125 1036 1152 1040" stroke="#e6e6e6" stroke-width="6" stroke-linecap="round" fill="none"/><path d="M984 1034 Q955 1035 930 1030" stroke="#d0d0d0" stroke-width="4" stroke-linecap="round" fill="none"/><ellipse cx="911.7" cy="1028.6" rx="25" ry="6.5" transform="rotate(8 911.7 1028.6)" fill="#9a9a9a" stroke="#e6e6e6" stroke-width="4"/><ellipse cx="1075" cy="992" rx="5" ry="8" fill="#8a8a8a"/><ellipse cx="858" cy="812" rx="14" ry="5" transform="rotate(-55 858 812)" fill="#808080" stroke="#e6e6e6" stroke-width="4.4"/><ellipse cx="832" cy="862" rx="13" ry="5" transform="rotate(-75 832 862)" fill="#808080" stroke="#e6e6e6" stroke-width="4.4"/><ellipse cx="828" cy="912" rx="5.5" ry="12" transform="rotate(0 828 912)" fill="#808080" stroke="#e6e6e6" stroke-width="4.4"/><ellipse cx="844" cy="970" rx="7" ry="16" transform="rotate(-28 844 970)" fill="#808080" stroke="#e6e6e6" stroke-width="4.4"/><ellipse cx="1238" cy="845" rx="6" ry="14" transform="rotate(-30 1238 845)" fill="#808080" stroke="#e6e6e6" stroke-width="4.4"/><ellipse cx="1252" cy="902" rx="6" ry="14" transform="rotate(0 1252 902)" fill="#808080" stroke="#e6e6e6" stroke-width="4.4"/><ellipse cx="1243" cy="951" rx="7" ry="15" transform="rotate(22 1243 951)" fill="#808080" stroke="#e6e6e6" stroke-width="4.4"/><ellipse cx="1208" cy="1006" rx="6.5" ry="19" transform="rotate(45 1208 1006)" fill="#808080" stroke="#e6e6e6" stroke-width="4.4"/><path d="M905 765 Q925 745 935 745" stroke="#9a9a9a" stroke-width="5" fill="none"/><path d="M1155 755 Q1175 762 1190 782" stroke="#a6a6a6" stroke-width="5" fill="none"/><rect x="1010" y="714" width="63" height="19" rx="5" fill="#9c9c9c" stroke="#cfcfcf" stroke-width="2"/><ellipse cx="967.4" cy="928.5" rx="6" ry="4" transform="rotate(-40 967.4 928.5)" fill="#f0f0f0"/><ellipse cx="992.6" cy="906.8" rx="3.5" ry="3.5" transform="rotate(0 992.6 906.8)" fill="#f0f0f0"/><ellipse cx="977" cy="897" rx="2.5" ry="2.5" transform="rotate(0 977 897)" fill="#f0f0f0"/><ellipse cx="974.3" cy="908.5" rx="2" ry="2" transform="rotate(0 974.3 908.5)" fill="#f0f0f0"/><ellipse cx="910" cy="910.4" rx="3" ry="2" transform="rotate(0 910 910.4)" fill="#f0f0f0"/><ellipse cx="920.4" cy="907" rx="2.5" ry="2.5" transform="rotate(0 920.4 907)" fill="#f0f0f0"/><ellipse cx="944.7" cy="921.7" rx="6" ry="3" transform="rotate(0 944.7 921.7)" fill="#f0f0f0"/><ellipse cx="947.3" cy="946" rx="3.5" ry="5" transform="rotate(0 947.3 946)" fill="#f0f0f0"/><ellipse cx="937.8" cy="939" rx="3" ry="2" transform="rotate(-30 937.8 939)" fill="#f0f0f0"/><ellipse cx="976" cy="907.8" rx="2" ry="2" transform="rotate(0 976 907.8)" fill="#f0f0f0"/><ellipse cx="993.4" cy="907" rx="3.5" ry="3.5" transform="rotate(0 993.4 907)" fill="#f0f0f0"/><ellipse cx="903.3" cy="868.4" rx="2.5" ry="2.5" transform="rotate(0 903.3 868.4)" fill="#f0f0f0"/><ellipse cx="939.2" cy="881.3" rx="3" ry="3" transform="rotate(0 939.2 881.3)" fill="#f0f0f0"/><ellipse cx="915.3" cy="910" rx="2" ry="2" transform="rotate(0 915.3 910)" fill="#f0f0f0"/><ellipse cx="1113.3" cy="920.7" rx="5" ry="4.5" transform="rotate(0 1113.3 920.7)" fill="#f0f0f0"/><ellipse cx="1127.2" cy="921.6" rx="4.5" ry="4" transform="rotate(0 1127.2 921.6)" fill="#f0f0f0"/><ellipse cx="1118.5" cy="946" rx="3.5" ry="3.5" transform="rotate(0 1118.5 946)" fill="#f0f0f0"/><ellipse cx="1132.4" cy="946" rx="3.5" ry="3.5" transform="rotate(0 1132.4 946)" fill="#f0f0f0"/><ellipse cx="1110" cy="902.4" rx="5" ry="2" transform="rotate(-30 1110 902.4)" fill="#f0f0f0"/><ellipse cx="1166" cy="943.4" rx="5" ry="2" transform="rotate(35 1166 943.4)" fill="#f0f0f0"/><ellipse cx="1147.8" cy="956.5" rx="4" ry="1.5" transform="rotate(30 1147.8 956.5)" fill="#f0f0f0"/><ellipse cx="1155.7" cy="905.2" rx="3" ry="2" transform="rotate(0 1155.7 905.2)" fill="#f0f0f0"/><ellipse cx="1171" cy="905.2" rx="4" ry="1.5" transform="rotate(30 1171 905.2)" fill="#f0f0f0"/><ellipse cx="1142.2" cy="876.5" rx="2.5" ry="2.5" transform="rotate(0 1142.2 876.5)" fill="#f0f0f0"/><ellipse cx="1190" cy="895.6" rx="3" ry="1.5" transform="rotate(0 1190 895.6)" fill="#f0f0f0"/><ellipse cx="1008" cy="930" rx="2" ry="2" transform="rotate(0 1008 930)" fill="#f0f0f0"/><ellipse cx="1150" cy="830" rx="1.5" ry="1.5" transform="rotate(0 1150 830)" fill="#f0f0f0"/><path d="M962 932 L952 945" stroke="#ddd" stroke-width="1.5"/></g></svg><!--/FCT1-->
<div class="a" style="left:1311px;top:423px;width:545px;height:865px;background:#000;border:2px solid #5aaee6"></div>
<!--FCT2--><svg class="a" style="left:1312px;top:424px" width="543" height="863" viewBox="1312 424 543 863"><defs><filter id="bl2" x="-5%" y="-5%" width="110%" height="110%"><feGaussianBlur stdDeviation="0.8"/></filter></defs><g filter="url(#bl2)"><path d="M1314 580 L1855 580 L1855 700 L1852 800 L1846 850 L1838 920 L1829.7 986 L1821.3 1049 L1815 1133 L1356.6 1133 L1352 1060 L1350.5 1026 L1349 980 L1348.5 945 L1348 880 L1346.5 823 L1340 795 L1334 775 L1325 735 L1316 693 L1314 680Z" fill="#6e6e6e"/><path d="M1314 600 L1362 600 Q1362 700 1360 860 L1347 860 Q1335 760 1314 700Z" fill="#767676"/><path d="M1366 628 L1440 640 Q1420 700 1398 760 Q1382 800 1372 828 Q1366 760 1364 700Z" fill="#4c4c4c"/><path d="M1349 860 Q1350 940 1354 1017 L1360 1133 L1357 1133 Q1350 1000 1348 900Z" fill="#8a8a8a"/><path d="M1812 700 Q1835 800 1836 900 Q1828 1000 1818 1120 L1826 1120 Q1838 1000 1846 900 Q1846 800 1830 700Z" fill="#5c5c5c"/><path d="M1595 581 L1645 581 Q1640 610 1620 615 Q1600 610 1595 581Z" fill="#a8a8a8"/><ellipse cx="1580" cy="595" rx="6" ry="10" fill="#bdbdbd"/><path d="M1652 583 Q1662 610 1655 640" stroke="#b0b0b0" stroke-width="3" fill="none"/><path d="M1560 600 Q1555 620 1558 640" stroke="#999" stroke-width="3" fill="none"/><path d="M1352 1000 Q1400 950 1480 944 Q1530 935 1560 905 Q1600 930 1640 945 L1650 1133 L1358 1133Z" fill="#7a7a7a"/><path d="M1575 640 L1650 640 Q1660 760 1665 850 L1545 860 Q1570 760 1575 640Z" fill="#777"/><path d="M1543.0 618.0 C1554.8 614.4 1565.8 618.3 1572.0 622.0 C1578.2 625.7 1579.7 628.7 1580.5 640.0 C1581.3 651.3 1577.8 674.5 1577.0 690.0 C1576.2 705.5 1578.5 719.4 1576.0 732.7 C1573.5 746.0 1568.0 760.9 1562.0 769.8 C1556.0 778.7 1546.8 781.0 1540.0 786.0 C1533.2 791.0 1524.7 793.4 1521.0 800.0 C1517.3 806.6 1516.5 817.4 1518.0 825.4 C1519.5 833.4 1525.5 841.4 1530.0 848.0 C1534.5 854.6 1541.2 857.2 1545.0 865.0 C1548.8 872.8 1552.5 885.0 1553.0 895.0 C1553.5 905.0 1552.5 918.0 1548.0 925.0 C1543.5 932.0 1537.3 933.8 1526.0 937.0 C1514.7 940.2 1496.4 940.0 1480.0 944.0 C1463.6 948.0 1444.7 950.6 1427.5 960.8 C1410.3 971.0 1384.4 1008.5 1377.0 1005.0 C1369.6 1001.5 1379.8 964.2 1383.0 940.0 C1386.2 915.8 1392.8 883.2 1396.0 860.0 C1399.2 836.8 1399.5 817.8 1402.3 801.0 C1405.1 784.2 1408.6 773.0 1412.8 759.0 C1417.0 745.0 1419.8 731.0 1427.5 717.0 C1435.2 703.0 1446.8 687.2 1459.0 675.0 C1471.2 662.8 1487.0 653.0 1501.0 643.5 C1515.0 634.0 1531.2 621.6 1543.0 618.0Z" fill="#000"/><path d="M1686.0 637.0 C1696.5 633.5 1700.8 637.2 1710.0 643.5 C1719.2 649.8 1732.0 662.8 1741.5 675.0 C1751.0 687.2 1760.0 703.0 1766.7 717.0 C1773.4 731.0 1777.5 745.0 1781.4 759.0 C1785.3 773.0 1787.9 784.2 1790.0 801.0 C1792.1 817.8 1793.0 840.2 1794.0 860.0 C1795.0 879.8 1795.7 900.0 1796.0 920.0 C1796.3 940.0 1796.3 962.0 1796.0 980.0 C1795.7 998.0 1801.3 1026.3 1794.0 1028.0 C1786.7 1029.7 1767.8 1000.2 1752.0 990.0 C1736.2 979.8 1716.5 970.0 1699.5 967.0 C1682.5 964.0 1662.2 969.2 1650.0 972.0 C1637.8 974.8 1631.8 988.0 1626.0 984.0 C1620.2 980.0 1611.5 957.0 1615.5 948.0 C1619.5 939.0 1641.6 936.0 1650.0 930.0 C1658.4 924.0 1665.0 921.7 1666.0 912.0 C1667.0 902.3 1656.7 886.4 1656.0 872.0 C1655.3 857.6 1661.0 840.9 1661.6 825.4 C1662.1 809.9 1661.6 797.9 1659.3 779.0 C1657.0 760.1 1650.0 731.1 1648.0 712.0 C1646.0 692.9 1640.7 677.0 1647.0 664.5 C1653.3 652.0 1675.5 640.5 1686.0 637.0Z" fill="#000"/><path d="M1486 655 Q1515 618 1545 614 Q1568 614 1580 628" stroke="#c8c8c8" stroke-width="7" fill="none"/><path d="M1645 676 Q1655 630 1690 627 Q1712 628 1722 645" stroke="#c8c8c8" stroke-width="7" fill="none"/><path d="M1594 658 Q1605 650 1618 654 Q1622 690 1612 725 Q1604 742 1595 738 Q1587 700 1594 658Z" fill="#000"/><circle cx="1624.5" cy="731.5" r="20" fill="#ececec"/><circle cx="1632" cy="779" r="15" fill="#d8d8d8"/><path d="M1530 806 L1622 792" stroke="#e2e2e2" stroke-width="24" stroke-linecap="round"/><path d="M1530 808 L1505 830" stroke="#e0e0e0" stroke-width="9" stroke-linecap="round"/><path d="M1536 832 Q1560 815 1620 815 Q1660 830 1655 870 Q1650 898 1600 898 Q1555 895 1545 870 Q1530 850 1536 832Z" fill="#e8e8e8"/><ellipse cx="1600" cy="855" rx="35" ry="25" fill="#f2f2f2"/><path d="M1560 898 Q1600 915 1650 900 L1655 935 Q1600 950 1565 930Z" fill="#7e7e7e"/><ellipse cx="1585" cy="937" rx="5" ry="10" fill="#111"/><path d="M1615 950 Q1640 945 1700 962 Q1752 985 1795 1030 L1790 1133 L1655 1133 Z" fill="#646464"/><ellipse cx="1672" cy="1013" rx="50" ry="34" transform="rotate(8 1672 1013)" fill="#727272" stroke="#575757" stroke-width="3"/><ellipse cx="1762" cy="1062" rx="27" ry="66" transform="rotate(-14 1762 1062)" fill="#8c8c8c"/><path d="M1715 1020 Q1735 1060 1735 1130 L1700 1130 Q1705 1070 1700 1030Z" fill="#4c4c4c"/><ellipse cx="1660" cy="1080" rx="38" ry="20" fill="#7a7a7a"/><circle cx="1664" cy="1110" r="14" fill="#6a6a6a" stroke="#9a9a9a" stroke-width="2"/><circle cx="1664" cy="1110" r="7" fill="#000"/><ellipse cx="1655" cy="1131" rx="8" ry="4" fill="#000"/><circle cx="1697" cy="1129" r="3" fill="#000"/><circle cx="1722" cy="1128" r="3" fill="#000"/><path d="M1584 1133 L1584 1118 Q1610 1112 1640 1122 L1640 1133Z" fill="#b0b0b0"/><path d="M1700 1048 Q1730 1050 1745 1055" stroke="#aaa" stroke-width="4" fill="none"/><ellipse cx="1617.6" cy="1050" rx="4" ry="4" transform="rotate(0 1617.6 1050)" fill="#f0f0f0"/><ellipse cx="1633.4" cy="1047" rx="4" ry="4" transform="rotate(0 1633.4 1047)" fill="#f0f0f0"/><ellipse cx="1653.3" cy="1053" rx="4" ry="4" transform="rotate(0 1653.3 1053)" fill="#f0f0f0"/><ellipse cx="1670" cy="1052" rx="4" ry="4" transform="rotate(0 1670 1052)" fill="#f0f0f0"/><ellipse cx="1604" cy="1089" rx="4.5" ry="4.5" transform="rotate(0 1604 1089)" fill="#f0f0f0"/><ellipse cx="1606" cy="1104.7" rx="4.5" ry="4.5" transform="rotate(0 1606 1104.7)" fill="#f0f0f0"/><ellipse cx="1331" cy="585" rx="16" ry="7" transform="rotate(10 1331 585)" fill="#f0f0f0"/><path d="M1793 606 Q1805 585 1830 582 L1855 581 L1855 594 Q1830 594 1815 598 Q1802 603 1797 608Z" fill="#f0f0f0"/><ellipse cx="1829" cy="624" rx="23" ry="13" transform="rotate(8 1829 624)" fill="#5e5e5e" stroke="#e8e8e8" stroke-width="3.3"/><path d="M1794 693 L1847 733" stroke="#e8e8e8" stroke-width="5" stroke-linecap="round"/><ellipse cx="1816" cy="700" rx="6" ry="3" transform="rotate(-20 1816 700)" fill="#000"/><path d="M1834 740 L1848 758" stroke="#dcdcdc" stroke-width="4" stroke-linecap="round"/><ellipse cx="1775" cy="640" rx="30" ry="22" fill="#5a5a5a"/><path d="M1330 606 Q1360 610 1380 620 L1395 630" stroke="#cfcfcf" stroke-width="4" fill="none"/><path d="M1420 635 Q1445 645 1465 652" stroke="#dadada" stroke-width="5" fill="none"/><ellipse cx="1483" cy="613" rx="14.5" ry="10.5" transform="rotate(20 1483 613)" fill="#3a3a3a" stroke="#f4f4f4" stroke-width="5.5"/><ellipse cx="1497" cy="648" rx="12.5" ry="7.5" transform="rotate(-25 1497 648)" fill="#3a3a3a" stroke="#f4f4f4" stroke-width="5.5"/><ellipse cx="1453" cy="684.5" rx="8.5" ry="10.5" transform="rotate(20 1453 684.5)" fill="#3a3a3a" stroke="#f4f4f4" stroke-width="5.5"/><ellipse cx="1420" cy="737" rx="7.5" ry="11.5" transform="rotate(15 1420 737)" fill="#3a3a3a" stroke="#f4f4f4" stroke-width="5.5"/><ellipse cx="1403.4" cy="785.3" rx="6.5" ry="10.5" transform="rotate(12 1403.4 785.3)" fill="#3a3a3a" stroke="#f4f4f4" stroke-width="5.5"/><ellipse cx="1395" cy="830.5" rx="7.0" ry="11.5" transform="rotate(10 1395 830.5)" fill="#3a3a3a" stroke="#f4f4f4" stroke-width="5.5"/><ellipse cx="1387.6" cy="876.8" rx="7.0" ry="13.5" transform="rotate(10 1387.6 876.8)" fill="#3a3a3a" stroke="#f4f4f4" stroke-width="5.5"/><ellipse cx="1382.4" cy="927.2" rx="7.0" ry="14.5" transform="rotate(10 1382.4 927.2)" fill="#3a3a3a" stroke="#f4f4f4" stroke-width="5.5"/><ellipse cx="1373" cy="989" rx="7.0" ry="14.5" transform="rotate(10 1373 989)" fill="#3a3a3a" stroke="#f4f4f4" stroke-width="5.5"/><ellipse cx="1368.7" cy="1067" rx="5.5" ry="11.5" transform="rotate(0 1368.7 1067)" fill="#3a3a3a" stroke="#f4f4f4" stroke-width="5.5"/><ellipse cx="1725.8" cy="660.3" rx="11.5" ry="7.5" transform="rotate(30 1725.8 660.3)" fill="#3a3a3a" stroke="#f4f4f4" stroke-width="5.5"/><ellipse cx="1763.6" cy="697" rx="8.5" ry="10.5" transform="rotate(-20 1763.6 697)" fill="#3a3a3a" stroke="#f4f4f4" stroke-width="5.5"/><ellipse cx="1784.6" cy="752.7" rx="6.5" ry="11.5" transform="rotate(-10 1784.6 752.7)" fill="#3a3a3a" stroke="#f4f4f4" stroke-width="5.5"/><ellipse cx="1795" cy="807.3" rx="6.0" ry="11.5" transform="rotate(-5 1795 807.3)" fill="#3a3a3a" stroke="#f4f4f4" stroke-width="5.5"/><ellipse cx="1800.3" cy="864" rx="6.5" ry="13.5" transform="rotate(0 1800.3 864)" fill="#3a3a3a" stroke="#f4f4f4" stroke-width="5.5"/><ellipse cx="1801.4" cy="910.4" rx="6.5" ry="13.5" transform="rotate(0 1801.4 910.4)" fill="#3a3a3a" stroke="#f4f4f4" stroke-width="5.5"/><ellipse cx="1802.4" cy="957.7" rx="6.5" ry="13.5" transform="rotate(0 1802.4 957.7)" fill="#3a3a3a" stroke="#f4f4f4" stroke-width="5.5"/><ellipse cx="1802.4" cy="1014.4" rx="6.5" ry="13.5" transform="rotate(0 1802.4 1014.4)" fill="#3a3a3a" stroke="#f4f4f4" stroke-width="5.5"/><ellipse cx="1800.3" cy="1080.5" rx="6.5" ry="13.5" transform="rotate(0 1800.3 1080.5)" fill="#3a3a3a" stroke="#f4f4f4" stroke-width="5.5"/><path d="M1486 906 L1515 879" stroke="#f0f0f0" stroke-width="7" stroke-linecap="round"/><path d="M1500 893 L1470 878" stroke="#f0f0f0" stroke-width="2" stroke-linecap="round"/><path d="M1505 762 L1520 785" stroke="#f0f0f0" stroke-width="3" stroke-linecap="round"/><path d="M1520 785 L1500 795" stroke="#f0f0f0" stroke-width="2" stroke-linecap="round"/><path d="M1537 738 L1544 760" stroke="#f0f0f0" stroke-width="2" stroke-linecap="round"/><path d="M1540 705 L1548 730" stroke="#f0f0f0" stroke-width="2" stroke-linecap="round"/><path d="M1548 730 L1560 740" stroke="#f0f0f0" stroke-width="2" stroke-linecap="round"/><path d="M1475 820 L1505 815" stroke="#f0f0f0" stroke-width="2" stroke-linecap="round"/><path d="M1485 870 L1500 860" stroke="#f0f0f0" stroke-width="2" stroke-linecap="round"/><path d="M1450 855 L1470 850" stroke="#f0f0f0" stroke-width="2" stroke-linecap="round"/><path d="M1480 760 L1495 770" stroke="#f0f0f0" stroke-width="2" stroke-linecap="round"/><path d="M1683 745 L1668 800" stroke="#f0f0f0" stroke-width="6" stroke-linecap="round"/><path d="M1665 820 L1685 830" stroke="#f0f0f0" stroke-width="5" stroke-linecap="round"/><path d="M1690 870 L1700 880" stroke="#f0f0f0" stroke-width="3" stroke-linecap="round"/><path d="M1760 945 L1748 938" stroke="#f0f0f0" stroke-width="3" stroke-linecap="round"/><path d="M1700 760 L1705 790" stroke="#f0f0f0" stroke-width="3" stroke-linecap="round"/><path d="M1690 930 L1700 912" stroke="#f0f0f0" stroke-width="3" stroke-linecap="round"/><path d="M1730 918 L1738 935" stroke="#f0f0f0" stroke-width="2" stroke-linecap="round"/><path d="M1750 835 L1760 870" stroke="#f0f0f0" stroke-width="2" stroke-linecap="round"/><path d="M1720 920 L1700 918" stroke="#f0f0f0" stroke-width="2" stroke-linecap="round"/><path d="M1445 973 L1460 962" stroke="#f0f0f0" stroke-width="2" stroke-linecap="round"/><ellipse cx="1688" cy="772" rx="3.5" ry="3.5" transform="rotate(0 1688 772)" fill="#f0f0f0"/><ellipse cx="1697" cy="784" rx="3.5" ry="3.5" transform="rotate(0 1697 784)" fill="#f0f0f0"/><ellipse cx="1505" cy="868" rx="3" ry="3" transform="rotate(0 1505 868)" fill="#f0f0f0"/><ellipse cx="1495" cy="812" rx="4" ry="4" transform="rotate(0 1495 812)" fill="#f0f0f0"/><ellipse cx="1526" cy="800" rx="3" ry="3" transform="rotate(0 1526 800)" fill="#f0f0f0"/><ellipse cx="1689" cy="943" rx="3" ry="3" transform="rotate(0 1689 943)" fill="#f0f0f0"/><ellipse cx="1739" cy="915" rx="2.5" ry="2.5" transform="rotate(0 1739 915)" fill="#f0f0f0"/><ellipse cx="1727" cy="895" rx="3.5" ry="3.5" transform="rotate(0 1727 895)" fill="#f0f0f0"/><ellipse cx="1741" cy="628.6" rx="3" ry="3" transform="rotate(0 1741 628.6)" fill="#f0f0f0"/><ellipse cx="1748.7" cy="639.3" rx="3" ry="3" transform="rotate(0 1748.7 639.3)" fill="#f0f0f0"/><ellipse cx="1753.4" cy="646" rx="2.5" ry="2.5" transform="rotate(0 1753.4 646)" fill="#f0f0f0"/><ellipse cx="1770" cy="647.3" rx="3" ry="3" transform="rotate(0 1770 647.3)" fill="#f0f0f0"/><ellipse cx="1670" cy="708" rx="2" ry="2" transform="rotate(0 1670 708)" fill="#f0f0f0"/><ellipse cx="1713" cy="765" rx="2" ry="2" transform="rotate(0 1713 765)" fill="#f0f0f0"/><ellipse cx="1512" cy="895" rx="2.5" ry="2.5" transform="rotate(0 1512 895)" fill="#f0f0f0"/><ellipse cx="1698" cy="810" rx="3" ry="3" transform="rotate(0 1698 810)" fill="#f0f0f0"/></g></svg><!--/FCT2-->
<div class="t" style="left:780px;top:436px;font-size:12.4px;color:#bdbdbd">Series: 5 / 57</div>
<div class="t" style="left:1213px;top:436px;font-size:12.4px;color:#bdbdbd;width:88px;text-align:right">Image: 57 / 181</div>
<div class="t" style="left:780px;top:1262px;font-size:12.5px;color:#bdbdbd">WW/WC: 840/135</div>
<div class="t" style="left:1200px;top:1262px;font-size:12.5px;color:#bdbdbd;width:102px;text-align:right">Zoom: 1.19</div>
<div class="t" style="left:1322px;top:436px;font-size:12.4px;color:#bdbdbd">Series: 6 / 36</div>
<div class="t" style="left:1740px;top:436px;font-size:12.4px;color:#bdbdbd;width:104px;text-align:right">Image: 36 / 70</div>
<div class="t" style="left:1322px;top:1262px;font-size:12.5px;color:#bdbdbd">WW/WC: 840/135</div>
<div class="t" style="left:1740px;top:1262px;font-size:12.5px;color:#bdbdbd;width:104px;text-align:right">Zoom: 1.22</div>
</div>

</div>

</body></html>
